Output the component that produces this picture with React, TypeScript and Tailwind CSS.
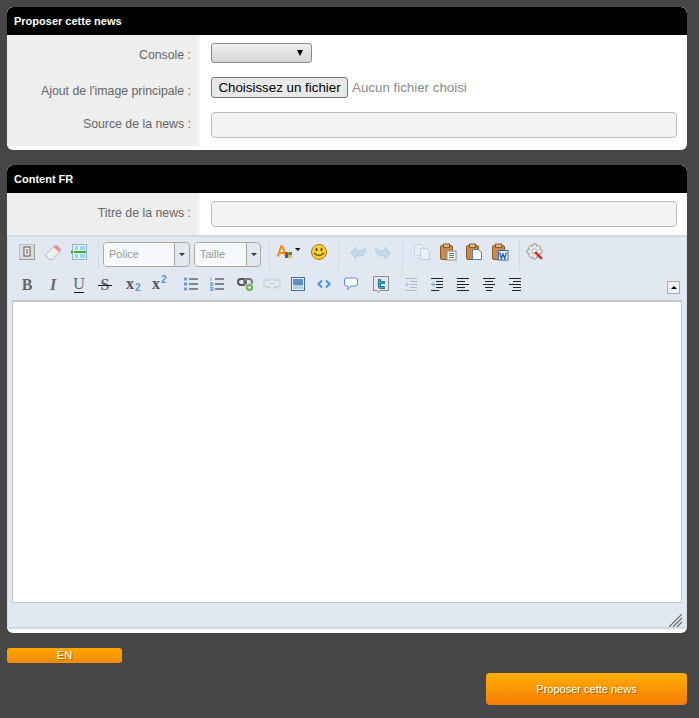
import React from "react";

const font = "font-['Liberation_Sans',Arial,sans-serif]";

const Slot: React.FC<{ className?: string; children: React.ReactNode }> = ({ className = "", children }) => (
    <div className={`w-[26px] h-[26px] flex items-center justify-center shrink-0 ${className}`}>{children}</div>
);

const Sep: React.FC<{ className?: string }> = ({ className = "" }) => (
    <div className={`w-px h-[30px] mt-[6px] bg-[#d3dbe6] shrink-0 ${className}`} />
);

const Ic: React.FC<{ w?: number; h?: number; children: React.ReactNode }> = ({ w = 18, h = 18, children }) => (
    <svg width={w} height={h} viewBox={`0 0 ${w} ${h}`} fill="none">{children}</svg>
);

const Source = () => (
    <Ic w={16} h={16}>
        <rect x=".5" y=".5" width="15" height="15" fill="#dcdcdc" stroke="#c2c2c2" />
        <path d="M.5 15.500h15v-15" stroke="#9a9a9a" />
        <rect x="5" y="3" width="6" height="9" fill="#f2f2f2" stroke="#555" />
        <rect x="7" y="5" width="2" height="5" fill="#9a9a9a" />
    </Ic>
);
const Eraser = () => (
    <Ic>
        <path d="M1.500 12 10 3.500q1.500-1.500 3 0l3 2.500q1.300 1.300 0 2.600L8 16.500H5z" fill="#f0f0f0" stroke="#b5b5b5" />
        <path d="M9.500 4 10.500 3q2-1.500 3.500 0l2 2q1.300 1.500 0 3l-1 1z" fill="#ee8c9a" />
    </Ic>
);
const Template = () => (
    <Ic w={16} h={16}>
        <rect x="1.500" y=".5" width="14" height="15" fill="#dff3f8" stroke="#8bb8c8" />
        <path d="M4 3h3M9 3h5M4 5h3M9 5h5M4 11h3M9 11h5M4 13h3M9 13h5" stroke="#62b4dc" />
        <rect x="3" y="7" width="12" height="2" fill="#35b43a" />
        <path d="M0 6.200 2.500 8 0 9.800z" fill="#2aa02e" />
    </Ic>
);
const FontColor = () => (
    <div className="relative w-[24px] h-[18px]">
        <svg width="24" height="18" viewBox="0 0 24 18" fill="none">
            <path d="M.8 13.500 4 3.500h1.500L9 13.500M2.500 10h5" stroke="#f08a10" strokeWidth="2" />
            <rect x="8" y="9" width="3.500" height="3" fill="#e03020" />
            <rect x="11.500" y="9" width="3.500" height="3" fill="#2f9e2f" />
            <rect x="8" y="12" width="3.500" height="3" fill="#2a5fd0" />
            <rect x="11.500" y="12" width="3.500" height="3" fill="#f5c518" />
            <path d="M18 5h5.500l-2.700 3z" fill="#111" />
        </svg>
    </div>
);
const Smile = () => (
    <Ic>
        <circle cx="9" cy="9" r="7.500" fill="#f8d030" stroke="#a87c10" />
        <ellipse cx="6.500" cy="6.500" rx="1" ry="1.800" fill="#5a4208" />
        <ellipse cx="11.500" cy="6.500" rx="1" ry="1.800" fill="#5a4208" />
        <path d="M4 10q5 5 10 0" stroke="#6a4e08" strokeWidth="1.200" />
    </Ic>
);
const Undo = ({ flip = false }: { flip?: boolean }) => (
    <svg width="16" height="13" viewBox="0 0 16 13" fill="none" className={flip ? "-scale-x-100" : ""}>
        <path d="M.5 7 6 1v3.500h3.500q4 0 6-3.500 0 9-6 9H6v3z" fill="#c3daec" stroke="#b5cfe4" />
    </svg>
);
const Copy = () => (
    <Ic>
        <path d="M1.500 1.500h7l2 2v9h-9z" fill="#e7edf5" stroke="#c8d5e6" />
        <path d="M7.500 5.500h6l3 3v8h-9z" fill="#eaf0f7" stroke="#bccde3" />
    </Ic>
);
const Clip = () => (
    <>
        <rect x="1.500" y="2.500" width="12" height="14" rx="1.500" fill="#c78a4c" stroke="#8a5a28" />
        <rect x="4.500" y="1" width="6" height="3.500" fill="#e3b77f" stroke="#8a5a28" />
    </>
);
const PasteText = () => (
    <Ic>
        <Clip />
        <rect x="8" y="8" width="9" height="9" fill="#f3f3f3" stroke="#8f8f8f" />
        <path d="M10 10.500h5M10 12.500h5M10 14.500h5" stroke="#777" />
    </Ic>
);
const PastePlain = () => (
    <Ic>
        <Clip />
        <path d="M7.500 6.500h6l3 3v7h-9z" fill="#fbfdff" stroke="#4a7cc8" />
    </Ic>
);
const PasteWord = () => (
    <Ic>
        <Clip />
        <rect x="7.500" y="7.500" width="9.500" height="9.500" fill="#eef4fc" stroke="#3a67b8" />
        <path d="M8.800 9.500l1.500 6 1.700-4.500 1.700 4.500 1.500-6" stroke="#2a58b0" strokeWidth="1.300" />
    </Ic>
);
const Gear = () => (
    <Ic>
        <path d="M7 1h3l.6 2.200 2-.9 2 2-.9 2L16 7v3l-2.200.6.900 2-2 2-2-.9L10 16H7l-.6-2.200-2 .9-2-2 .9-2L1 10V7l2.200-.6-.9-2 2-2 2 .9z" fill="#e8e8e8" stroke="#999" />
        <circle cx="8.500" cy="8.500" r="2.500" fill="#fff" stroke="#aaa" />
        <path d="M9 9l7 7" stroke="#d8202c" strokeWidth="2.400" />
    </Ic>
);
const Sub = ({ sup = false }: { sup?: boolean }) => (
    <div className="relative w-[18px] h-[18px]">
        <span className="absolute left-[1px] top-[2px] text-[16px] font-bold text-[#555] leading-[14px] font-['Liberation_Serif',serif]">x</span>
        <span className={`absolute left-[10px] ${sup ? "top-0" : "top-[8px]"} text-[10px] font-bold text-[#5a96dc] leading-[10px] ${font}`}>2</span>
    </div>
);
const Letter = ({ children, className = "" }: { children: React.ReactNode; className?: string }) => (
    <span className={`text-[16px] leading-[15px] text-[#666] font-['Liberation_Serif',serif] ${className}`}>{children}</span>
);
const Under = () => (
    <div className="flex flex-col items-center">
        <Letter>U</Letter>
        <div className="w-[10px] h-px bg-black mt-[1px]" />
    </div>
);
const Strike = () => (
    <div className="relative flex items-center justify-center w-[14px]">
        <Letter className="font-bold">S</Letter>
        <div className="absolute left-0 right-0 top-[8px] h-px bg-[#222]" />
    </div>
);
const Bullets = () => (
    <Ic w={14} h={14}>
        <rect x="0" y=".5" width="3" height="3" fill="#6b9bd8" />
        <rect x="0" y="5.500" width="3" height="3" fill="#6b9bd8" />
        <rect x="0" y="10.500" width="3" height="3" fill="#6b9bd8" />
        <path d="M5 2h9M5 7h9M5 12h9" stroke="#222" />
    </Ic>
);
const Numbers = () => (
    <Ic w={14} h={14}>
        <path d="M1 .5v3M0 6h3v1H0v1.500h3M0 10.500h3v3H0M0 12h3" stroke="#6b9bd8" />
        <path d="M5 2h9M5 7h9M5 12h9" stroke="#222" />
    </Ic>
);
const Link = () => (
    <Ic>
        <rect x="1" y="4" width="8" height="6" rx="3" stroke="#555" strokeWidth="2" />
        <rect x="7" y="4" width="8" height="6" rx="3" stroke="#777" strokeWidth="2" />
        <circle cx="12.500" cy="12.500" r="4" fill="#50a030" stroke="#eaf5e0" />
        <path d="M10.500 12.500h4M12.500 10.500v4" stroke="#fff" strokeWidth="1.400" />
    </Ic>
);
const Unlink = () => (
    <Ic>
        <path d="M7 5H4a3 3 0 0 0 0 7h3M11 5h3a3 3 0 0 1 0 7h-3" stroke="#cfd5dc" strokeWidth="2" />
        <path d="M6 8.500h6" stroke="#cfd5dc" />
        <path d="M6 2l2 3M12 2l-2 3M6 15l2-3M12 15l-2-3" stroke="#bcd0e8" />
    </Ic>
);
const ImageIc = () => (
    <Ic w={14} h={14}>
        <rect x=".5" y=".5" width="13" height="13" fill="#e8eef6" stroke="#3f6fa8" />
        <rect x="2" y="2" width="10" height="6" fill="#5f8fc4" />
        <rect x="2" y="8" width="10" height="4" fill="#b9cfe6" />
    </Ic>
);
const Code = () => (
    <Ic w={14} h={10}>
        <path d="M5 1.500 1.500 5 5 8.500M9 1.500 12.500 5 9 8.500" stroke="#4f94e0" strokeWidth="2.200" />
    </Ic>
);
const Bubble = () => (
    <Ic w={14} h={14}>
        <path d="M2.500 1h9q2 0 2 2v4q0 2-2 2H7l-3 3.500V9H2.500q-2 0-2-2V3q0-2 2-2z" fill="#f7fafd" stroke="#5a8fc4" />
    </Ic>
);
const Twitter = () => (
    <Ic w={16} h={17}>
        <path d="M.5.5h15v14H7l-1.500 2-1.500-2H.5z" fill="#e8e8e6" stroke="#8a8a8a" />
        <path d="M6.500 3v6.500q0 2 2 2h3.500M6.500 6.500H12" stroke="#17648c" strokeWidth="3.200" />
        <path d="M6.500 3v6.500q0 2 2 2h3.500M6.500 6.500H12" stroke="#3aa8d8" strokeWidth="1.600" />
    </Ic>
);
const Lines = ({ mode, light = false }: { mode: "outdent" | "indent" | "left" | "center" | "right"; light?: boolean }) => {
    const c = light ? "#b5bac1" : "#222";
    const paths: Record<string, string> = {
        outdent: "M0 .5h12M5 3.500h7M5 6.500h7M5 9.500h7M0 12.500h12",
        indent: "M0 .5h12M5 3.500h7M5 6.500h7M5 9.500h7M0 12.500h8",
        left: "M0 .5h12M0 3.500h8M0 6.500h12M0 9.500h8M0 12.500h12",
        center: "M0 .5h12M2 3.500h8M0 6.500h12M2 9.500h8M3 12.500h6",
        right: "M0 .5h12M4 3.500h8M0 6.500h12M4 9.500h8M3 12.500h9",
    };
    return (
        <Ic w={12} h={13}>
            <path d={paths[mode]} stroke={c} />
            {mode === "outdent" && <path d="M4 6.500H1M2.500 4.500l-2 2 2 2" stroke="#9cc0e8" />}
            {mode === "indent" && <path d="M0 6.500h3M2 4.500l2 2-2 2" stroke="#5a94dc" />}
        </Ic>
    );
};

const Combo: React.FC<{ label: string; className: string; inner: string }> = ({ label, className, inner }) => (
    <div className={`h-[25px] mt-[4px] border border-[#aaaa99] rounded-[4px] flex shrink-0 overflow-hidden ${className}`}>
        <div className={`${inner} bg-[#f6f8fb] flex items-center pl-[5px] text-[11px] text-[#999] border-r border-[#aaaa99] ${font}`}>
            {label}
        </div>
        <div className="flex-1 flex items-center justify-center">
            <div className="w-0 h-0 border-x-[3px] border-x-transparent border-t-[3px] border-t-[#333]" />
        </div>
    </div>
);

const Row: React.FC<{ label: string; className: string; labelPt: string; ctrlPt: string; children: React.ReactNode }> = ({
    label,
    className,
    labelPt,
    ctrlPt,
    children,
}) => (
    <div className={`flex ${className}`}>
        <div className={`w-[190px] bg-[#eeeeee] text-right pr-[6px] text-[12.3px] leading-[18px] text-[#666] shrink-0 ${labelPt}`}>
            {label}
        </div>
        <div className="w-[3px] bg-[#f5f5f5] shrink-0" />
        <div className={`flex-1 pl-[11px] pr-[10px] ${ctrlPt}`}>{children}</div>
    </div>
);

const Header: React.FC<{ title: string }> = ({ title }) => (
    <div className="h-[28px] bg-black rounded-t-[6px] flex items-center pl-[7px] text-[11px] font-bold text-white">{title}</div>
);

const TextBox = () => (
    <input className="block w-full h-[26px] bg-[#f3f3f3] border border-[#bbbbbb] rounded-[4px]" />
);

export default function App() {
    return (
        <div className={`min-h-screen bg-[#464646] pt-[7px] pl-[7px] pr-[12px] ${font}`}>
            <div className="bg-white rounded-[6px] h-[143px] overflow-hidden">
                <Header title="Proposer cette news" />
                <Row label="Console :" className="h-[36px]" labelPt="pt-[11px]" ctrlPt="pt-[8px]">
                    <div className="w-[101px] h-[20px] rounded-[3px] border border-[#8a8a8a] bg-gradient-to-b from-[#f0f0f0] to-[#d4d4d4] flex items-center justify-end pr-[8px]">
                        <div className="w-0 h-0 border-x-[3.5px] border-x-transparent border-t-[6px] border-t-black" />
                    </div>
                </Row>
                <Row label="Ajout de l'image principale :" className="h-[37px]" labelPt="pt-[11px]" ctrlPt="pt-[6px]">
                    <div className="flex items-center">
                        <button className="w-[137px] h-[21px] rounded-[3px] border border-[#777] bg-[#e9e9e9] text-[13.333px] text-black">
                            Choisissez un fichier
                        </button>
                        <span className="ml-[4px] text-[13.333px] text-[#8a8a8a]">Aucun fichier choisi</span>
                    </div>
                </Row>
                <Row label="Source de la news :" className="h-[38px]" labelPt="pt-[7px]" ctrlPt="pt-[4px]">
                    <TextBox />
                </Row>
            </div>

            <div className="mt-[15px] bg-white rounded-[6px] h-[468px] overflow-hidden">
                <Header title="Content FR" />
                <Row label="Titre de la news :" className="h-[42px]" labelPt="pt-[11px]" ctrlPt="pt-[8px]">
                    <TextBox />
                </Row>
                <div className="h-[394px] bg-[#e2e8f1] border-t-2 border-b-2 border-[#d3dbe6] border-x border-x-[#d3dbe6] flex flex-col">
                    <div className="h-[32px] -mt-px flex items-center pl-[6px]">
                        <Slot><Source /></Slot>
                        <Slot><Eraser /></Slot>
                        <Slot><Template /></Slot>
                        <Sep className="ml-[6px]" />
                        <Combo label="Police" className="ml-[4px] w-[87px]" inner="w-[71px]" />
                        <Combo label="Taille" className="ml-[4px] w-[67px]" inner="w-[52px]" />
                        <Sep className="ml-[8px]" />
                        <div className="ml-[7px]"><FontColor /></div>
                        <Slot className="ml-[5px]"><Smile /></Slot>
                        <Sep className="ml-[6px]" />
                        <Slot className="ml-[6px]"><Undo /></Slot>
                        <Slot className="-ml-px"><Undo flip /></Slot>
                        <Sep className="ml-[6px]" />
                        <Slot className="ml-[6px]"><Copy /></Slot>
                        <Slot><PasteText /></Slot>
                        <Slot><PastePlain /></Slot>
                        <Slot><PasteWord /></Slot>
                        <Sep className="ml-[6px]" />
                        <Slot className="ml-[2px]"><Gear /></Slot>
                    </div>
                    <div className="h-[32px] flex items-center pl-[6px]">
                        <Slot><Letter className="font-bold">B</Letter></Slot>
                        <Slot><Letter className="font-bold italic">I</Letter></Slot>
                        <Slot><Under /></Slot>
                        <Slot><Strike /></Slot>
                        <Slot className="ml-[3px]"><Sub /></Slot>
                        <Slot><Sub sup /></Slot>
                        <Slot className="ml-[5px]"><Bullets /></Slot>
                        <Slot><Numbers /></Slot>
                        <Slot className="ml-[3px]"><Link /></Slot>
                        <Slot><Unlink /></Slot>
                        <Slot><ImageIc /></Slot>
                        <Slot><Code /></Slot>
                        <Slot className="ml-px"><Bubble /></Slot>
                        <Slot className="ml-[4px]"><Twitter /></Slot>
                        <Slot className="ml-[4px]"><Lines mode="outdent" light /></Slot>
                        <Slot><Lines mode="indent" /></Slot>
                        <Slot><Lines mode="left" /></Slot>
                        <Slot><Lines mode="center" /></Slot>
                        <Slot><Lines mode="right" /></Slot>
                        <div className="ml-[139px] mt-[6px] w-[13px] h-[13px] border border-[#aaa] bg-[#f0f2f5] flex items-center justify-center">
                            <div className="w-0 h-0 border-x-[3px] border-x-transparent border-b-[3px] border-b-black" />
                        </div>
                    </div>
                    <div className="mx-[4px] h-[303px] bg-white border border-[#c4c8cc] border-t-2 shrink-0" />
                    <div className="flex-1 relative">
                        <svg width="13" height="13" viewBox="0 0 13 13" className="absolute right-[4px] bottom-0">
                            <path d="M0 13 13 0M4 13l9-9M8 13l5-5" stroke="#666" strokeWidth="1.200" />
                        </svg>
                    </div>
                </div>
            </div>

            <button className="mt-[15px] block w-[115px] h-[15px] rounded-[3px] bg-gradient-to-b from-[#ffa600] to-[#f58a05] text-[11px] leading-[15px] text-white [text-shadow:1px_1px_0_#b06a00]">
                EN
            </button>
            <div className="mt-[10px] flex justify-end">
                <button className="w-[201px] h-[32px] rounded-[4px] bg-gradient-to-b from-[#ffae00] to-[#f57c05] text-[11px] text-white [text-shadow:1px_1px_0_#a86400]">
                    Proposer cette news
                </button>
            </div>
        </div>
    );
}
